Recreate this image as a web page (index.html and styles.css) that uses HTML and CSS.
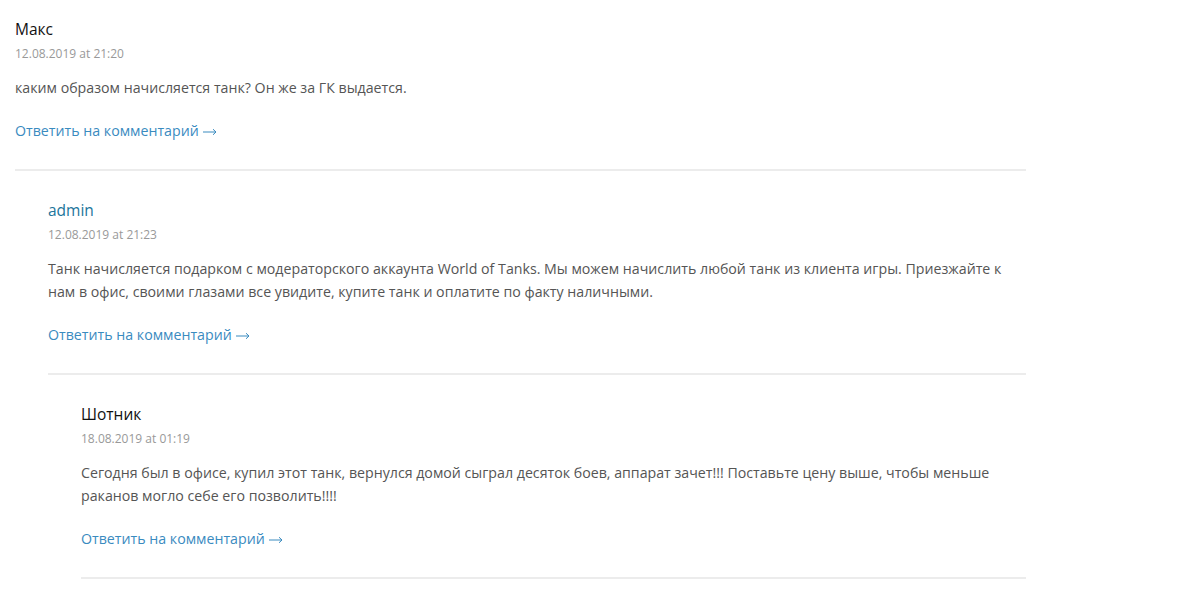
FILE: index.html
```html
<!DOCTYPE html>
<html lang="ru">
<head>
<meta charset="utf-8">
<title>Комментарии</title>
<link rel="stylesheet" href="styles.css">
</head>
<body>
<ol class="comments">
  <li class="comment">
    <article class="comment-body">
      <div class="author">Макс</div>
      <div class="date">12.08.2019 at 21:20</div>
      <p class="text">каким образом начисляется танк? Он же за ГК выдается.</p>
      <a class="reply" href="#">Ответить на комментарий <svg class="arrow" width="14" height="8" viewBox="0 0 14 8"><path d="M0 4h13M10 1.2L13 4l-3 2.8" fill="none" stroke="currentColor" stroke-width="1"/></svg></a>
    </article>
    <ol class="children">
      <li class="comment">
        <article class="comment-body">
          <div class="author author-admin">admin</div>
          <div class="date">12.08.2019 at 21:23</div>
          <p class="text">Танк начисляется подарком с модераторского аккаунта World of Tanks. Мы можем начислить любой танк из клиента игры. Приезжайте к нам в офис, своими глазами все увидите, купите танк и оплатите по факту наличными.</p>
          <a class="reply" href="#">Ответить на комментарий <svg class="arrow" width="14" height="8" viewBox="0 0 14 8"><path d="M0 4h13M10 1.2L13 4l-3 2.8" fill="none" stroke="currentColor" stroke-width="1"/></svg></a>
        </article>
        <ol class="children">
          <li class="comment">
            <article class="comment-body">
              <div class="author">Шотник</div>
              <div class="date">18.08.2019 at 01:19</div>
              <p class="text">Сегодня был в офисе, купил этот танк, вернулся домой сыграл десяток боев, аппарат зачет!!! Поставьте цену выше, чтобы меньше раканов могло себе его позволить!!!!</p>
              <a class="reply" href="#">Ответить на комментарий <svg class="arrow" width="14" height="8" viewBox="0 0 14 8"><path d="M0 4h13M10 1.2L13 4l-3 2.8" fill="none" stroke="currentColor" stroke-width="1"/></svg></a>
            </article>
          </li>
        </ol>
      </li>
    </ol>
  </li>
</ol>
</body>
</html>
```

FILE: styles.css
```css
html, body {
  margin: 0;
  padding: 0;
  background: #fff;
}
body {
  font-family: "Open Sans", "Noto Sans", sans-serif;
  color: #555;
  padding: 0 0 0 15px;
}
.comments {
  list-style: none;
  margin: 0;
  padding: 0;
  width: 1011px;
}
.children {
  list-style: none;
  margin: 0;
  padding: 0 0 0 33px;
}
.comment-body {
  display: flex;
  flex-direction: column;
  align-items: flex-start;
  padding: 17px 0 26px;
  border-bottom: 2px solid #ececec;
}
.children .comment-body {
  padding-top: 27px;
}
.author {
  font-size: 15.5px;
  line-height: 24px;
  color: #111;
}
.author-admin {
  color: #21759b;
}
.date {
  font-size: 12px;
  line-height: 24px;
  color: #999;
  margin-top: 1px;
}
.text {
  margin: 10px 0 0;
  font-size: 14.2px;
  line-height: 23px;
  color: #555;
}
.reply {
  display: inline-flex;
  align-items: center;
  gap: 4px;
  margin-top: 20px;
  font-size: 14.2px;
  line-height: 24px;
  color: #3a8bbf;
  text-decoration: none;
}
.arrow {
  display: block;
  margin-top: 2px;
}
```
